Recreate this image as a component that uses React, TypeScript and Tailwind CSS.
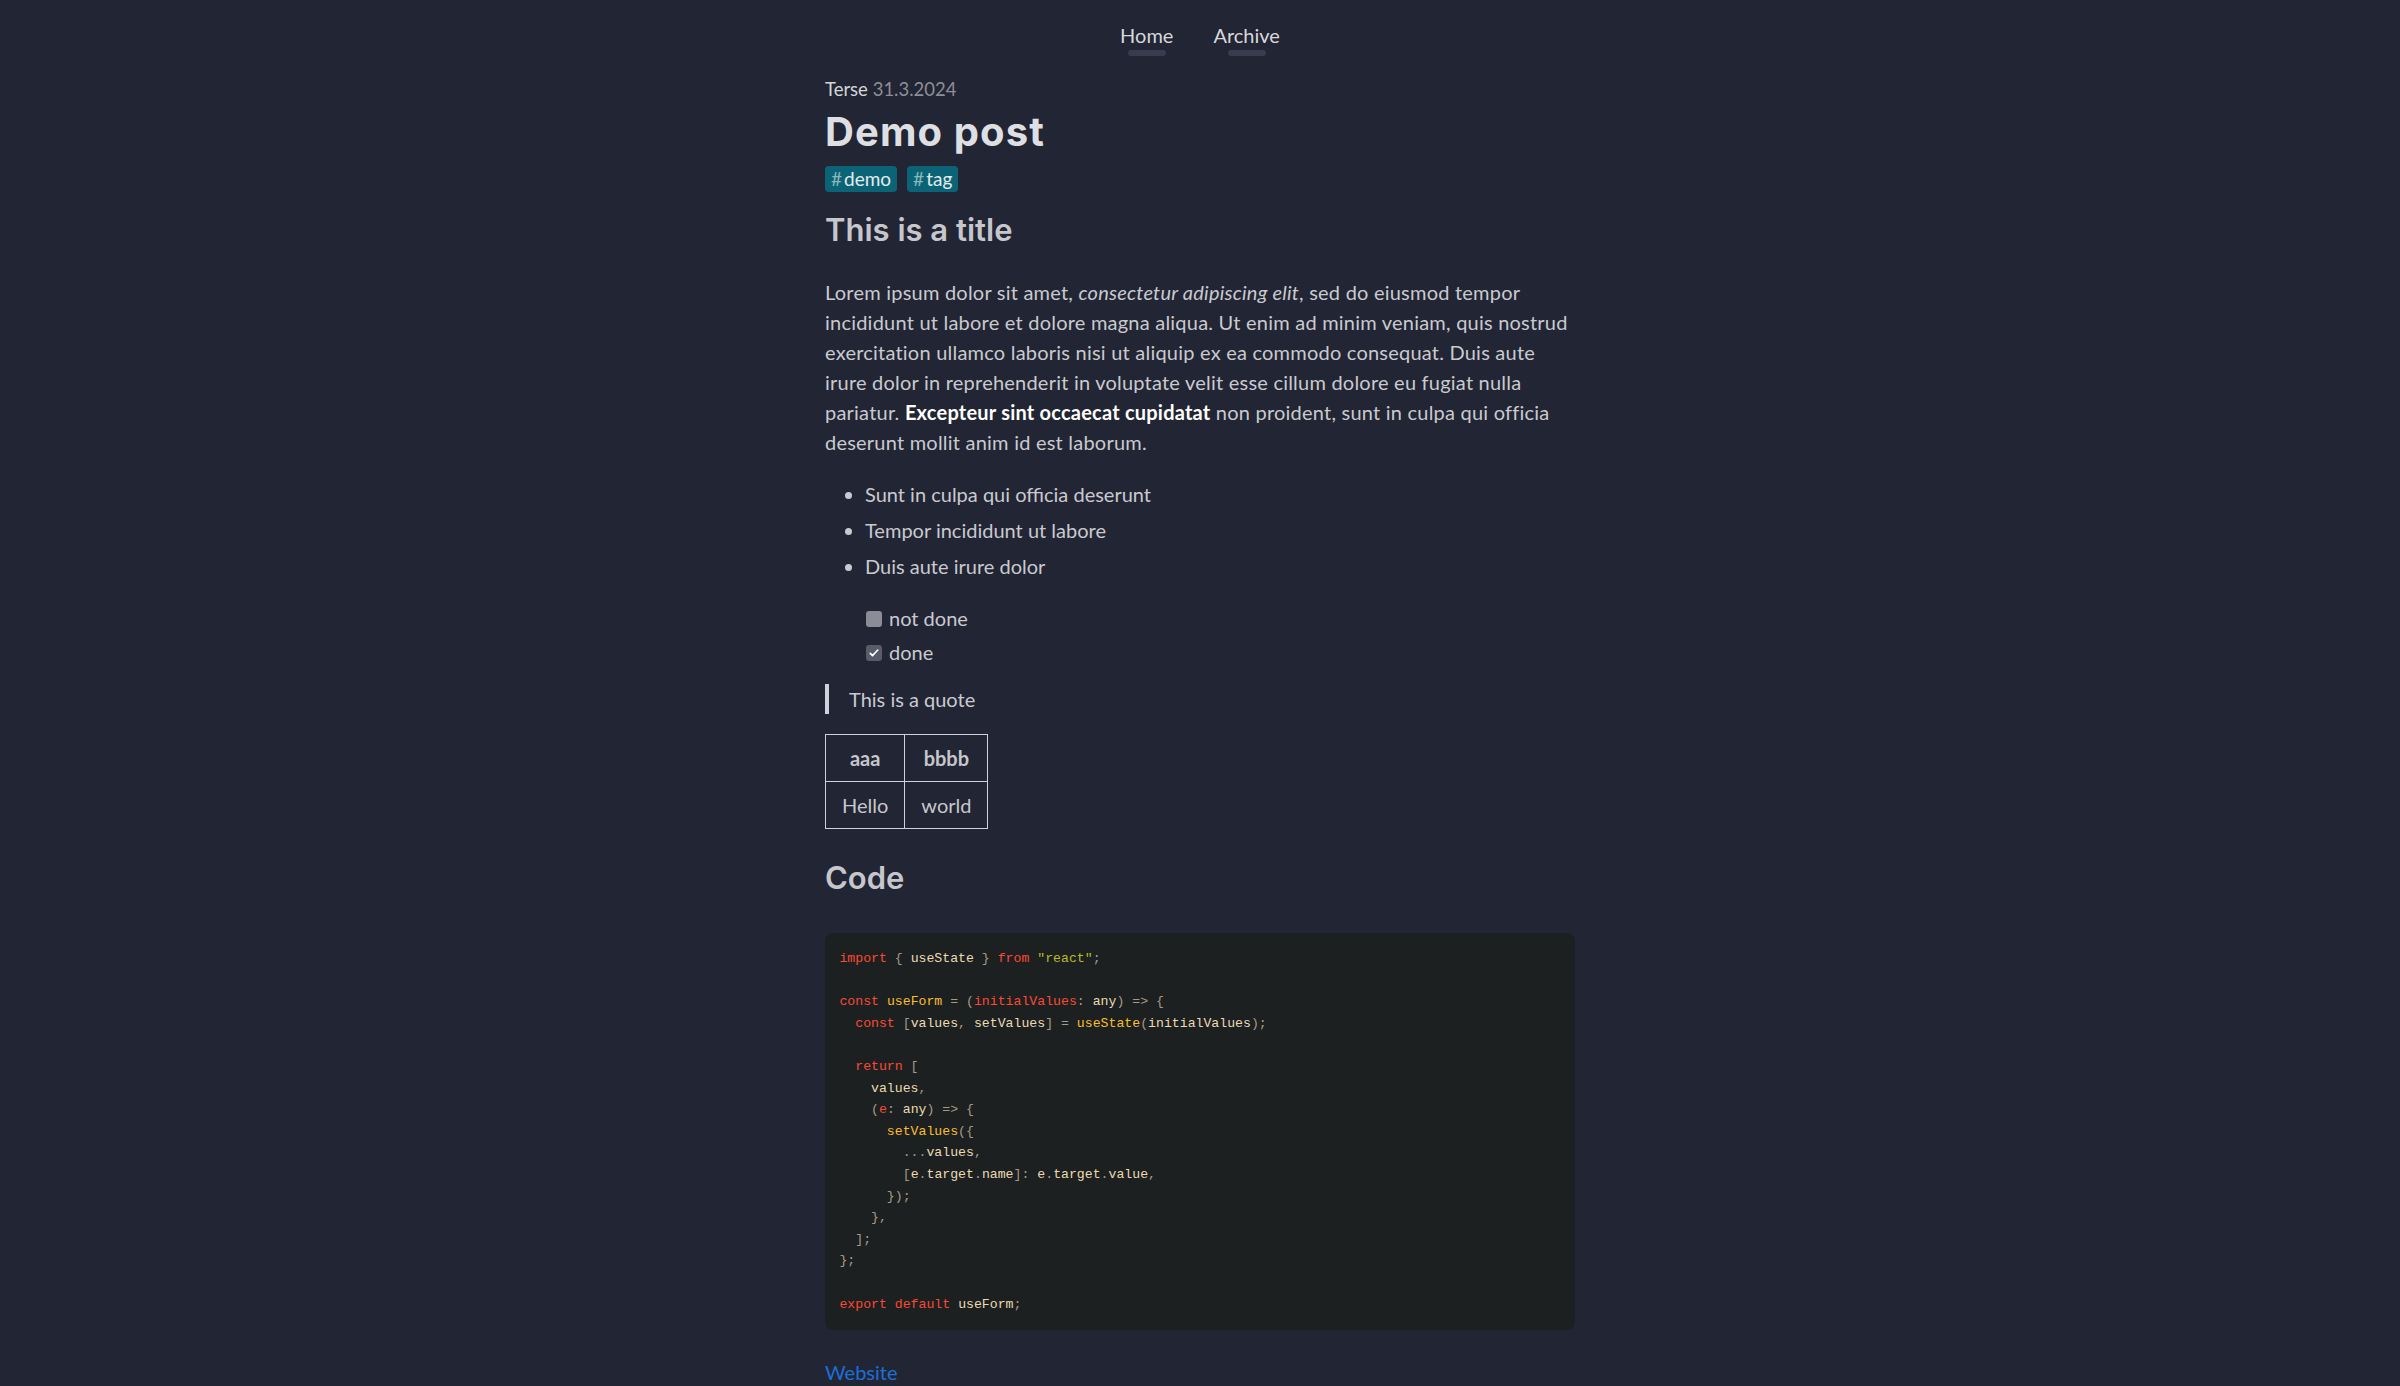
type Tok = [string, string]

const R = "text-[#fb4934]"
const Y = "text-[#fabd2f]"
const G = "text-[#b8bb26]"
const C = "text-[#ebdbb2]"
const P = "text-[#a89984]"

const codeLines: Tok[][] = [
  [["import", R], [" { ", P], ["useState", C], [" } ", P], ["from", R], [" ", C], ['"react"', G], [";", P]],
  [],
  [["const", R], [" ", C], ["useForm", Y], [" = (", P], ["initialValues", R], [": ", P], ["any", C], [") => {", P]],
  [["  const", R], [" [", P], ["values", C], [", ", P], ["setValues", C], ["] = ", P], ["useState", Y], ["(", P], ["initialValues", C], [");", P]],
  [],
  [["  return", R], [" [", P]],
  [["    values", C], [",", P]],
  [["    (", P], ["e", R], [": ", P], ["any", C], [") => {", P]],
  [["      setValues", Y], ["({", P]],
  [["        ...", P], ["values", C], [",", P]],
  [["        [", P], ["e", C], [".", P], ["target", C], [".", P], ["name", C], ["]: ", P], ["e", C], [".", P], ["target", C], [".", P], ["value", C], [",", P]],
  [["      });", P]],
  [["    },", P]],
  [["  ];", P]],
  [["};", P]],
  [],
  [["export", R], [" ", C], ["default", R], [" ", C], ["useForm", C], [";", P]],
]

function NavLink({ label }: { label: string }) {
  return (
    <a href="#" className="flex flex-col items-center">
      <span className="text-[20px] leading-[30px] text-[#d7d8dc]">{label}</span>
      <span className="h-[6px] w-[38px] rounded-full bg-[#393c50]" />
    </a>
  )
}

function Tag({ name }: { name: string }) {
  return (
    <span className="flex items-center h-[26px] px-[6px] rounded-[4px] bg-[#0b6475] text-[19px] leading-[26px]">
      <span className="text-[#8db7be] mr-[2px]">#</span>
      <span className="text-[#e4eaec]">{name}</span>
    </span>
  )
}

function CheckItem({ done, label }: { done: boolean; label: string }) {
  return (
    <li className="flex items-center gap-[7px] leading-[30px]">
      {done ? (
        <span className="flex items-center justify-center w-[16px] h-[16px] mt-[1px] rounded-[3px] bg-[#595b6a]">
          <svg viewBox="0 0 16 16" className="w-[12px] h-[12px]" fill="none">
            <path d="M3 8.5l3 3 7-7.5" stroke="#ffffff" strokeWidth="2.2" strokeLinecap="round" strokeLinejoin="round" />
          </svg>
        </span>
      ) : (
        <span className="w-[16px] h-[16px] mt-[1px] rounded-[3px] bg-[#8b8c95]" />
      )}
      <span>{label}</span>
    </li>
  )
}

export default function App() {
  return (
    <div className="min-h-screen bg-[#222533] text-[#c9cad0] font-['Lato','Noto_Sans',sans-serif] text-[20px] leading-[30px]">
      <nav className="flex justify-center gap-[40px] pt-[20px]">
        <NavLink label="Home" />
        <NavLink label="Archive" />
      </nav>

      <main className="mx-auto w-[750px]">
        <div className="mt-[20px] text-[18.5px] leading-[27px]">
          <span className="text-[#d4d5da]">Terse</span>{" "}
          <span className="text-[#8d8e97]">31.3.2024</span>
        </div>
        <h1 className="mt-[5px] font-['Inter',sans-serif] font-bold text-[40px] leading-[48px] tracking-[1.1px] text-[#dedfe3]">
          Demo post
        </h1>
        <div className="mt-[10px] flex gap-[10px]">
          <Tag name="demo" />
          <Tag name="tag" />
        </div>

        <h2 className="mt-[18px] font-['Inter',sans-serif] font-semibold text-[31px] leading-[40px] text-[#c6c7cc]">
          This is a title
        </h2>

        <p className="mt-[27px] tracking-[0.22px]">
          Lorem ipsum dolor sit amet, <em>consectetur adipiscing elit</em>, sed do eiusmod tempor incididunt ut
          labore et dolore magna aliqua. Ut enim ad minim veniam, quis nostrud exercitation ullamco laboris nisi
          ut aliquip ex ea commodo consequat. Duis aute irure dolor in reprehenderit in voluptate velit esse
          cillum dolore eu fugiat nulla pariatur. <strong className="font-bold text-white">Excepteur sint occaecat cupidatat</strong> non
          proident, sunt in culpa qui officia deserunt mollit anim id est laborum.
        </p>

        <ul className="mt-[22px] list-disc pl-[40px] flex flex-col gap-[6px]">
          <li>Sunt in culpa qui officia deserunt</li>
          <li>Tempor incididunt ut labore</li>
          <li>Duis aute irure dolor</li>
        </ul>

        <ul className="mt-[22px] pl-[41px] flex flex-col gap-[4px]">
          <CheckItem done={false} label="not done" />
          <CheckItem done={true} label="done" />
        </ul>

        <blockquote className="mt-[17px] border-l-[4px] border-[#d0d1da] pl-[20px]">This is a quote</blockquote>

        <table className="mt-[20px] border-collapse text-[#c6c7cc]">
          <thead>
            <tr>
              <th className="border border-[#d0d1da] px-[16px] py-[8px] font-bold text-center">aaa</th>
              <th className="border border-[#d0d1da] px-[16px] py-[8px] font-bold text-center">bbbb</th>
            </tr>
          </thead>
          <tbody>
            <tr>
              <td className="border border-[#d0d1da] px-[16px] py-[8px] text-center">Hello</td>
              <td className="border border-[#d0d1da] px-[16px] py-[8px] text-center">world</td>
            </tr>
          </tbody>
        </table>

        <h2 className="mt-[29px] font-['Inter',sans-serif] font-semibold text-[31px] leading-[40px] text-[#c6c7cc]">
          Code
        </h2>

        <pre className="mt-[35px] rounded-[8px] bg-[#1d2021] px-[14.4px] py-[15px] font-['DejaVu_Sans_Mono',monospace] text-[13.2px] leading-[21.6px] text-[#ebdbb2]">
          <code>
            {codeLines.map((line, i) => (
              <div key={i} className="h-[21.6px] whitespace-pre">
                {line.map(([t, c], j) => (
                  <span key={j} className={c}>
                    {t}
                  </span>
                ))}
              </div>
            ))}
          </code>
        </pre>

        <a href="#" className="mt-[27px] block w-fit text-[20px] leading-[30px] text-[#1d6fd8]">
          Website
        </a>
      </main>
    </div>
  )
}
